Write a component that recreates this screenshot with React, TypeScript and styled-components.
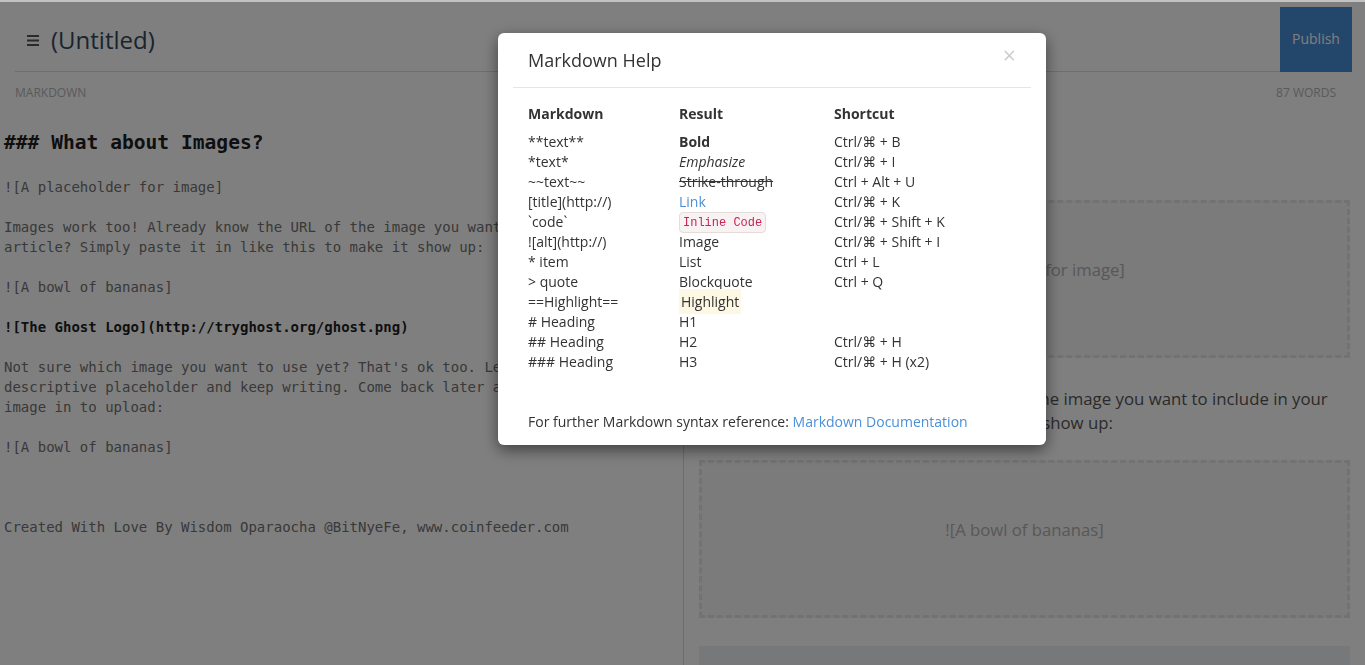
import React from "react";
import styled, { createGlobalStyle } from "styled-components";

const Global = createGlobalStyle`
  html, body { margin: 0; padding: 0; }
  body {
    width: 1365px;
    height: 665px;
    overflow: hidden;
    background: #fff;
    font-family: "Open Sans", "DejaVu Sans", sans-serif;
    color: #333;
  }
  * { box-sizing: border-box; }
`;

const Page = styled.div`
  width: 1365px;
  height: 665px;
  display: flex;
  flex-direction: column;
  overflow: hidden;
`;

const TopStrip = styled.div`
  height: 2px;
  background: #c2c2c2;
  flex: none;
`;

const Header = styled.header`
  flex: none;
  height: 70px;
  margin: 0 13px 0 15px;
  padding-top: 7px;
  display: flex;
  align-items: center;
  border-bottom: 1px solid #dcdcdc;
`;

const MenuButton = styled.span`
  display: flex;
  margin-left: 12px;
  margin-right: 12px;
  color: #555;
`;

const Title = styled.h1`
  margin: 0;
  font-size: 24px;
  font-weight: 400;
  color: #34495e;
  line-height: 30px;
  flex: 1;
`;

const PublishButton = styled.button`
  align-self: stretch;
  margin: -2px 0 -1px 0;
  padding: 0 0 2px 0;
  width: 72px;
  border: none;
  background: #468cd6;
  color: #fff;
  font-family: "Open Sans", sans-serif;
  font-size: 14px;
`;

const Panes = styled.div`
  flex: 1;
  display: grid;
  grid-template-columns: 684px 1fr;
  min-height: 0;
`;

const Pane = styled.section<{ $left?: boolean }>`
  display: flex;
  flex-direction: column;
  min-height: 0;
  overflow: hidden;
  border-right: ${(p) => (p.$left ? "1px solid #d8d8d8" : "none")};
`;

const PaneLabel = styled.div<{ $right?: boolean }>`
  height: 40px;
  line-height: 42px;
  font-size: 12px;
  text-transform: uppercase;
  color: #b4b4b4;
  padding: ${(p) => (p.$right ? "0 29px 0 0" : "0 0 0 15px")};
  text-align: ${(p) => (p.$right ? "right" : "left")};
`;

const Editor = styled.div`
  padding: 15px 0 0 4px;
  font-family: "DejaVu Sans Mono", "Liberation Mono", monospace;
  font-size: 14px;
  color: #727272;
`;

const Line = styled.div<{ $kind?: "heading" | "bold" }>`
  white-space: pre;
  height: ${(p) => (p.$kind === "heading" ? "30px" : "20px")};
  line-height: ${(p) => (p.$kind === "heading" ? "32px" : "20px")};
  font-size: ${(p) => (p.$kind === "heading" ? "19.6px" : "14px")};
  font-weight: ${(p) => (p.$kind ? 700 : 400)};
  color: ${(p) => (p.$kind ? "#1e1e1e" : "#727272")};
`;

const Preview = styled.div`
  padding: 15px 15px 0 15px;
  display: flex;
  flex-direction: column;
`;

const PreviewHeading = styled.h3`
  margin: 0 0 43px 0;
  font-size: 22px;
  line-height: 30px;
  font-weight: 700;
  color: #444;
`;

const ImageBox = styled.div`
  flex: none;
  height: 158px;
  padding-top: 53px;
  border: 3px dashed #e4e4e4;
  background: #f6f6f6;
  text-align: center;
  font-size: 16.7px;
  line-height: 28px;
  color: #b0b0b0;
`;

const PreviewText = styled.p`
  margin: 29px 0 25px 0;
  font-size: 16.8px;
  line-height: 24px;
  color: #555;
`;

const ImageStrip = styled.div`
  flex: none;
  height: 60px;
  margin-top: 28px;
  background: #eff1f5;
`;

const Overlay = styled.div`
  position: fixed;
  top: 2px;
  left: 0;
  right: 0;
  bottom: 0;
  background: rgba(0, 0, 0, 0.5);
`;

const ModalLayer = styled.div`
  position: fixed;
  inset: 0;
  padding: 33px 0 0 498px;
`;

const Modal = styled.div`
  width: 548px;
  background: #fff;
  border-radius: 6px;
  box-shadow: 0 5px 15px rgba(0, 0, 0, 0.5);
  font-size: 14px;
  line-height: 20px;
  color: #333;
`;

const ModalHeader = styled.div`
  margin: 0 15px;
  padding: 15px;
  border-bottom: 1px solid #e5e5e5;
  display: flex;
  align-items: flex-start;
`;

const ModalTitle = styled.h4`
  margin: 0;
  flex: 1;
  font-size: 18px;
  line-height: 24px;
  font-weight: 400;
  color: #333;
`;

const CloseButton = styled.button`
  border: none;
  background: none;
  padding: 0;
  margin: -5px 0 0 0;
  font-family: "Open Sans", sans-serif;
  font-size: 23px;
  line-height: 24px;
  font-weight: 400;
  color: #000;
  opacity: 0.2;
`;

const ModalBody = styled.div`
  padding: 16px 30px 13px 30px;
`;

const HelpGrid = styled.div`
  display: grid;
  grid-template-columns: 151px 155px 1fr;
`;

const HeadCell = styled.div`
  font-weight: 700;
  padding-bottom: 8px;
`;

const Cell = styled.div`
  height: 20px;
  white-space: nowrap;
`;

const Strong = styled.strong`
  font-weight: 700;
`;

const Em = styled.em`
  font-style: italic;
`;

const Strike = styled.span`
  text-decoration: line-through;
`;

const HelpLink = styled.a`
  color: #4a90d9;
  text-decoration: none;
`;

const InlineCode = styled.code`
  display: inline-block;
  vertical-align: top;
  font-family: "Liberation Mono", "DejaVu Sans Mono", monospace;
  font-size: 12px;
  line-height: 14px;
  padding: 3px 3px 2px 3px;
  margin-top: 0px;
  color: #c7254e;
  background: #f9f2f4;
  border: 1px solid #e6dcd6;
  border-radius: 4px;
`;

const Mark = styled.mark`
  background: #fcf8e3;
  color: #333;
  padding: 3px 2px;
`;

const Footer = styled.p`
  margin: 40px 0 0 0;
`;

const Kbd = styled.span`
  font-family: "Open Sans", "DejaVu Sans", sans-serif;
`;

const Hamburger = () => (
  <svg width="12" height="11" viewBox="0 0 12 11">
    <rect x="0" y="0" width="12" height="2" fill="currentColor" />
    <rect x="0" y="4.5" width="12" height="2" fill="currentColor" />
    <rect x="0" y="9" width="12" height="2" fill="currentColor" />
  </svg>
);

const cmd = "Ctrl/\u2318";

const rows: [React.ReactNode, React.ReactNode, React.ReactNode][] = [
  ["**text**", <Strong>Bold</Strong>, `${cmd} + B`],
  ["*text*", <Em>Emphasize</Em>, `${cmd} + I`],
  ["~~text~~", <Strike>Strike-through</Strike>, "Ctrl + Alt + U"],
  ["[title](http://)", <HelpLink href="#">Link</HelpLink>, `${cmd} + K`],
  ["`code`", <InlineCode>Inline Code</InlineCode>, `${cmd} + Shift + K`],
  ["![alt](http://)", "Image", `${cmd} + Shift + I`],
  ["* item", "List", "Ctrl + L"],
  ["> quote", "Blockquote", "Ctrl + Q"],
  ["==Highlight==", <Mark>Highlight</Mark>, ""],
  ["# Heading", "H1", ""],
  ["## Heading", "H2", `${cmd} + H`],
  ["### Heading", "H3", `${cmd} + H (x2)`],
];

type EditorLine = { text: string; kind?: "heading" | "bold" };

const editorLines: EditorLine[] = [
  { text: "### What about Images?", kind: "heading" },
  { text: "" },
  { text: "![A placeholder for image]" },
  { text: "" },
  { text: "Images work too! Already know the URL of the image you want to include in your" },
  { text: "article? Simply paste it in like this to make it show up:" },
  { text: "" },
  { text: "![A bowl of bananas]" },
  { text: "" },
  { text: "![The Ghost Logo](http://tryghost.org/ghost.png)", kind: "bold" },
  { text: "" },
  { text: "Not sure which image you want to use yet? That's ok too. Leave yourself a" },
  { text: "descriptive placeholder and keep writing. Come back later and drag and drop the" },
  { text: "image in to upload:" },
  { text: "" },
  { text: "![A bowl of bananas]" },
  { text: "" },
  { text: "" },
  { text: "" },
  { text: "Created With Love By Wisdom Oparaocha @BitNyeFe, www.coinfeeder.com" },
];

export default function App() {
  return (
    <>
      <Global />
      <Page>
        <TopStrip />
        <Header>
          <MenuButton>
            <Hamburger />
          </MenuButton>
          <Title>(Untitled)</Title>
          <PublishButton>Publish</PublishButton>
        </Header>
        <Panes>
          <Pane $left>
            <PaneLabel>Markdown</PaneLabel>
            <Editor>
              {editorLines.map((l, i) => (
                <Line key={i} $kind={l.kind}>
                  {l.text}
                </Line>
              ))}
            </Editor>
          </Pane>
          <Pane>
            <PaneLabel $right>87 words</PaneLabel>
            <Preview>
              <PreviewHeading>What about Images?</PreviewHeading>
              <ImageBox>![A placeholder for image]</ImageBox>
              <PreviewText>
                Images work too! Already know the URL of the image you want to include in your
                article? Simply paste it in like this to make it show up:
              </PreviewText>
              <ImageBox>![A bowl of bananas]</ImageBox>
              <ImageStrip />
            </Preview>
          </Pane>
        </Panes>
      </Page>
      <Overlay />
      <ModalLayer>
        <Modal>
          <ModalHeader>
            <ModalTitle>Markdown Help</ModalTitle>
            <CloseButton>×</CloseButton>
          </ModalHeader>
          <ModalBody>
            <HelpGrid>
              <HeadCell>Markdown</HeadCell>
              <HeadCell>Result</HeadCell>
              <HeadCell>Shortcut</HeadCell>
              {rows.map(([md, res, sc], i) => (
                <React.Fragment key={i}>
                  <Cell>{md}</Cell>
                  <Cell>{res}</Cell>
                  <Cell>
                    <Kbd>{sc}</Kbd>
                  </Cell>
                </React.Fragment>
              ))}
            </HelpGrid>
            <Footer>
              For further Markdown syntax reference:{" "}
              <HelpLink href="#">Markdown Documentation</HelpLink>
            </Footer>
          </ModalBody>
        </Modal>
      </ModalLayer>
    </>
  );
}
